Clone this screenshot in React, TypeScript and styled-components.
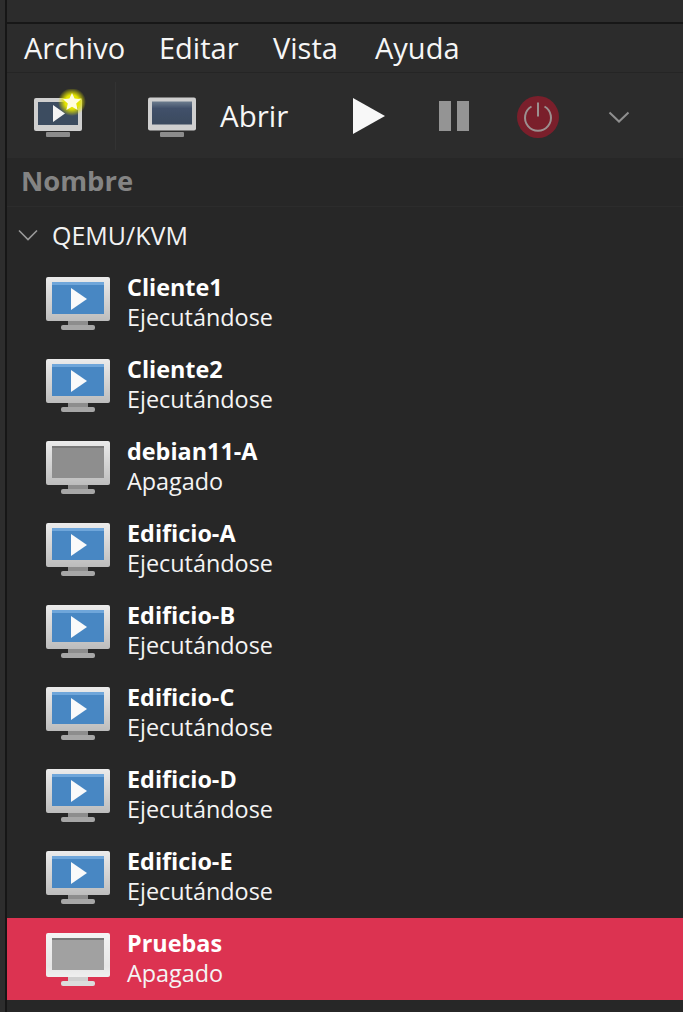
import styled, { createGlobalStyle } from 'styled-components';

const GlobalStyle = createGlobalStyle`
  html, body {
    margin: 0;
    padding: 0;
    background: #272727;
  }
  body {
    font-family: "Open Sans", "Noto Sans", "DejaVu Sans", sans-serif;
    color: #fff;
  }
`;

const Page = styled.div`
  width: 683px;
  height: 1012px;
  overflow: hidden;
  display: flex;
  background: #2c2c2c;
`;

const Edge = styled.div`
  width: 5px;
  flex: none;
  background: #2d2d2d;
  border-right: 2px solid #161616;
`;

const Main = styled.div`
  flex: 1;
  min-width: 0;
  display: flex;
  flex-direction: column;
`;

const TitleStrip = styled.div`
  height: 22px;
  background: #2c2c2c;
  border-bottom: 2px solid #171717;
  flex: none;
`;

const MenuBar = styled.div`
  height: 48px;
  flex: none;
  display: flex;
  align-items: center;
  gap: 34px;
  padding-left: 17px;
  background: #2c2c2c;
  border-bottom: 1px solid #252525;
`;

const MenuItem = styled.span<{ $width: number }>`
  width: ${(p) => p.$width}px;
  flex: none;
  font-size: 29px;
  line-height: 48px;
  white-space: nowrap;
  color: #f6f6f6;
`;

const Toolbar = styled.div`
  height: 85px;
  flex: none;
  display: flex;
  align-items: center;
  padding-left: 27px;
  background: #2c2c2c;
`;

const Separator = styled.div`
  width: 1px;
  height: 68px;
  margin: 0 32px 0 27px;
  background: #333333;
`;

const OpenLabel = styled.span`
  width: 69px;
  flex: none;
  font-size: 29.5px;
  white-space: nowrap;
  color: #f6f6f6;
  margin: 0 64px 0 24px;
`;

const ToolIcon = styled.svg<{ $gap?: number; $soft?: boolean }>`
  display: block;
  flex: none;
  margin-right: ${(p) => p.$gap ?? 0}px;
  filter: ${(p) => (p.$soft ? 'blur(0.4px)' : 'none')};
`;

const ColumnHeader = styled.div`
  height: 49px;
  flex: none;
  display: flex;
  align-items: center;
  padding: 0 0 3px 14px;
  box-sizing: border-box;
  background: #272727;
  border-bottom: 1px solid #2c2c2c;
  font-size: 27.4px;
  font-weight: 700;
  color: #848484;
`;

const List = styled.div`
  flex: 1;
  background: #272727;
`;

const GroupRow = styled.div`
  height: 55px;
  display: flex;
  align-items: center;
  gap: 14px;
  padding: 0 0 0 11px;
  box-sizing: border-box;
  font-size: 25px;
  color: #f2f2f2;
`;

const VmRow = styled.div<{ $selected?: boolean }>`
  height: 82px;
  display: flex;
  align-items: flex-start;
  gap: 16px;
  padding-left: 38px;
  box-sizing: border-box;
  background: ${(p) => (p.$selected ? '#dc3351' : 'transparent')};
`;

const MonitorSvg = styled.svg`
  display: block;
  flex: none;
  margin-top: 13px;
  filter: blur(0.6px);
`;

const VmText = styled.div`
  display: flex;
  flex-direction: column;
  padding-top: 10px;
`;

const VmName = styled.span`
  font-size: 23.4px;
  font-weight: 700;
  line-height: 30px;
  color: #ffffff;
`;

const VmStatus = styled.span`
  font-size: 23.4px;
  line-height: 30px;
  color: #f4f4f4;
`;

type MonitorProps = {
  kind: 'running' | 'off';
  selected?: boolean;
};

function Monitor({ kind, selected }: MonitorProps) {
  const screen = kind === 'running' ? '#4887c3' : selected ? '#a1a1a1' : '#8e8e8e';
  const id = `frame-${selected ? 'sel' : 'plain'}`;
  return (
    <MonitorSvg width="66" height="58" viewBox="0 0 66 58">
      <defs>
        <linearGradient id={id} x1="0" y1="0" x2="0" y2="1">
          <stop offset="0" stopColor={selected ? '#f4f4f4' : '#ebebeb'} />
          <stop offset="0.75" stopColor={selected ? '#e6e6e6' : '#c9c9c9'} />
          <stop offset="1" stopColor={selected ? '#efefef' : '#bcbcbc'} />
        </linearGradient>
      </defs>
      <rect x="1" y="2" width="64" height="44" rx="2" fill={`url(#${id})`} />
      <rect x="7" y="7" width="52" height="32" fill={screen} />
      {kind === 'running' && <rect x="7" y="7" width="52" height="3" fill="#6fa6da" />}
      {kind === 'off' && <rect x="7" y="7" width="52" height="2" fill="#787878" />}
      {kind === 'running' && <polygon points="26,13 26,35 42,24" fill="#fafafa" />}
      <rect x="23" y="46" width="20" height="5" fill={selected ? '#cfcfcf' : '#8d8d8d'} />
      <rect x="16" y="50" width="34" height="5" rx="2" fill={selected ? '#dcdcdc' : '#a6a6a6'} />
    </MonitorSvg>
  );
}

const machines = [
  { name: 'Cliente1', on: true },
  { name: 'Cliente2', on: true },
  { name: 'debian11-A', on: false },
  { name: 'Edificio-A', on: true },
  { name: 'Edificio-B', on: true },
  { name: 'Edificio-C', on: true },
  { name: 'Edificio-D', on: true },
  { name: 'Edificio-E', on: true },
  { name: 'Pruebas', on: false, selected: true },
];

export default function App() {
  return (
    <>
      <GlobalStyle />
      <Page>
        <Edge />
        <Main>
          <TitleStrip />
          <MenuBar>
            <MenuItem $width={101}>Archivo</MenuItem>
            <MenuItem $width={80}>Editar</MenuItem>
            <MenuItem $width={68}>Vista</MenuItem>
            <MenuItem $width={81}>Ayuda</MenuItem>
          </MenuBar>
          <Toolbar>
            {/* new vm */}
            <ToolIcon width="54" height="54" viewBox="0 0 54 54" $soft>
              <defs>
                <radialGradient id="glow">
                  <stop offset="0.5" stopColor="#e4e400" />
                  <stop offset="1" stopColor="#e4e400" stopOpacity="0" />
                </radialGradient>
              </defs>
              <rect x="0" y="9" width="48" height="33" rx="2" fill="#cfcfcf" />
              <rect x="4" y="13" width="40" height="23" fill="#3c4c60" />
              <rect x="12" y="43" width="24" height="5" rx="1" fill="#8c8c8c" />
              <polygon points="19,16 19,33 31,24.5" fill="#f4f4f4" />
              <circle cx="38" cy="13" r="14" fill="url(#glow)" />
              <polygon
                points="38,4 40.6,9.6 47,10.3 42.2,14.5 43.6,21 38,17.7 32.4,21 33.8,14.5 29,10.3 35.4,9.6"
                fill="#fffde0"
              />
            </ToolIcon>
            <Separator />
            <ToolIcon width="48" height="46" viewBox="0 0 48 46" $soft>
              <defs>
                <linearGradient id="dim" x1="0" y1="0" x2="0" y2="1">
                  <stop offset="0" stopColor="#6c7c8e" />
                  <stop offset="0.3" stopColor="#41506a" />
                  <stop offset="1" stopColor="#3b4a5e" />
                </linearGradient>
              </defs>
              <rect x="0" y="4.5" width="48" height="33" rx="2" fill="#cfcfcf" />
              <rect x="4" y="8.5" width="40" height="23" fill="url(#dim)" />
              <rect x="12" y="39" width="24" height="5" rx="1" fill="#8c8c8c" />
            </ToolIcon>
            <OpenLabel>Abrir</OpenLabel>
            <ToolIcon width="33" height="36" viewBox="0 0 33 36" $gap={53}>
              <polygon points="0,0 0,36 32,18" fill="#f8f8f8" />
            </ToolIcon>
            <ToolIcon width="31" height="30" viewBox="0 0 31 30" $gap={46}>
              <rect x="0" y="0" width="12" height="30" fill="#949494" />
              <rect x="18" y="0" width="12" height="30" fill="#949494" />
            </ToolIcon>
            <ToolIcon width="44" height="46" viewBox="0 0 44 46" $gap={48}>
              <circle cx="22" cy="24" r="21" fill="#7a1f2b" />
              <path d="M15.5 13.5a13 13 0 1 0 13 0" fill="none" stroke="#9c9090" strokeWidth="2" />
              <path d="M22 9.5v14" stroke="#9c9090" strokeWidth="2" fill="none" />
            </ToolIcon>
            <ToolIcon width="22" height="14" viewBox="0 0 22 14">
              <path d="M1.5 3.5 11 12.5 20.5 3.5" fill="none" stroke="#8f8f8f" strokeWidth="2" />
            </ToolIcon>
          </Toolbar>
          <ColumnHeader>Nombre</ColumnHeader>
          <List>
            <GroupRow>
              <svg width="20" height="12" viewBox="0 0 20 12">
                <path d="M1 1.5 10 10.5 19 1.5" fill="none" stroke="#9a9a9a" strokeWidth="1.6" />
              </svg>
              <span>QEMU/KVM</span>
            </GroupRow>
            {machines.map((vm) => (
              <VmRow key={vm.name} $selected={vm.selected}>
                <Monitor kind={vm.on ? 'running' : 'off'} selected={vm.selected} />
                <VmText>
                  <VmName>{vm.name}</VmName>
                  <VmStatus>{vm.on ? 'Ejecutándose' : 'Apagado'}</VmStatus>
                </VmText>
              </VmRow>
            ))}
          </List>
        </Main>
      </Page>
    </>
  );
}
